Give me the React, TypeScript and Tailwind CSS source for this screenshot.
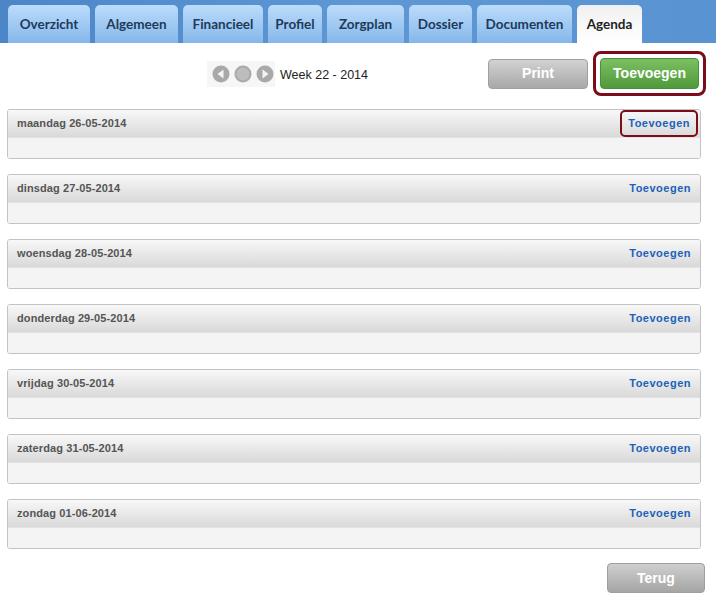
import React from "react";

const tabs = [
  { label: "Overzicht", w: "w-[82px]" },
  { label: "Algemeen", w: "w-[83px]" },
  { label: "Financieel", w: "w-[80px]" },
  { label: "Profiel", w: "w-[54px]" },
  { label: "Zorgplan", w: "w-[77px]" },
  { label: "Dossier", w: "w-[63px]" },
  { label: "Documenten", w: "w-[95px]" },
];

const days = [
  "maandag 26-05-2014",
  "dinsdag 27-05-2014",
  "woensdag 28-05-2014",
  "donderdag 29-05-2014",
  "vrijdag 30-05-2014",
  "zaterdag 31-05-2014",
  "zondag 01-06-2014",
];

const NavIcon = ({ dir }: { dir?: "left" | "right" }) => (
  <svg width="18" height="18" viewBox="0 0 18 18">
    <circle cx="9" cy="9" r="8.5" fill="#a9a9a9" />
    {dir === "left" && <path d="M11.5 4.5 L5.5 9 L11.5 13.5 Z" fill="#f4f4f4" />}
    {dir === "right" && <path d="M6.5 4.5 L12.5 9 L6.5 13.5 Z" fill="#f4f4f4" />}
    {!dir && <circle cx="9" cy="9" r="6.5" fill="#bdbdbd" />}
  </svg>
);

const App: React.FC = () => {
  return (
    <div className="w-[716px] h-[605px] bg-white font-['Liberation_Sans',Arial,sans-serif]">
      {/* tab bar */}
      <div className="h-[43px] bg-gradient-to-r from-[#4d86c8] via-[#5e97d4] to-[#5a93d1] flex items-end gap-[5px] pl-[8px]">
        {tabs.map((t) => (
          <div
            key={t.label}
            className={`${t.w} h-[38px] rounded-t-[5px] bg-gradient-to-b from-[#bcdcfb] to-[#85b7ea] flex items-center justify-center text-[13.5px] font-bold text-[#203a5a] font-['Lato',sans-serif]`}
          >
            {t.label}
          </div>
        ))}
        <div className="w-[65px] h-[38px] rounded-t-[5px] bg-gradient-to-b from-[#f0f0f0] to-white flex items-center justify-center text-[13.5px] font-bold text-[#222] font-['Lato',sans-serif]">
          Agenda
        </div>
      </div>

      {/* toolbar */}
      <div className="flex items-center h-[45px] mt-[8px] pr-[10px]">
        <div className="ml-[207px] flex items-center gap-[4px] bg-[#f6f6f6] pl-[5px] pr-[1px] h-[26px]">
          <NavIcon dir="left" />
          <NavIcon />
          <NavIcon dir="right" />
        </div>
        <span className="ml-[5px] pt-[3px] text-[12.5px] text-[#222] whitespace-nowrap">Week 22 - 2014</span>
        <div className="flex-1" />
        <button className="w-[100px] h-[30px] rounded-[4px] bg-gradient-to-b from-[#d2d2d2] to-[#a8a8a8] border border-[#a0a0a0] text-white font-bold text-[14px]">
          Print
        </button>
        <div className="ml-[5px] rounded-[8px] border-[3px] border-[#7c0c17] p-[4px]">
          <button className="w-[99px] h-[31px] rounded-[4px] bg-gradient-to-b from-[#7cc062] to-[#4f9a3b] border border-[#4c8f3a] text-white font-bold text-[14px] block">
            Toevoegen
          </button>
        </div>
      </div>

      {/* days */}
      <div className="flex flex-col gap-[15px] pl-[7px] pr-[15px] mt-[13px]">
        {days.map((d, i) => (
          <div key={d} className="h-[50px] border border-[#c3c3c3] rounded-[3px] overflow-hidden flex flex-col">
            <div className="h-[27px] bg-gradient-to-b from-[#f8f8f8] to-[#d9d9d9] flex items-center justify-between pl-[9px] pr-[9px]">
              <span className="text-[11px] font-bold text-[#555] tracking-[0.1px]">{d}</span>
              {i === 0 ? (
                <span className="-mr-[7px] rounded-[5px] border-[2px] border-[#7c0c17] px-[6px] py-[3px] text-[11px] font-bold text-[#1b62b8] tracking-[0.5px]">
                  Toevoegen
                </span>
              ) : (
                <span className="text-[11px] font-bold text-[#1b62b8] tracking-[0.5px]">Toevoegen</span>
              )}
            </div>
            <div className="flex-1 bg-[#f4f4f4] border-t border-[#e2e2e2]" />
          </div>
        ))}
      </div>

      <div className="flex justify-end pr-[11px] mt-[14px]">
        <button className="w-[98px] h-[30px] rounded-[4px] bg-gradient-to-b from-[#cfcfcf] to-[#a5a5a5] border border-[#9e9e9e] text-white font-bold text-[14px]">
          Terug
        </button>
      </div>
    </div>
  );
};

export default App;
